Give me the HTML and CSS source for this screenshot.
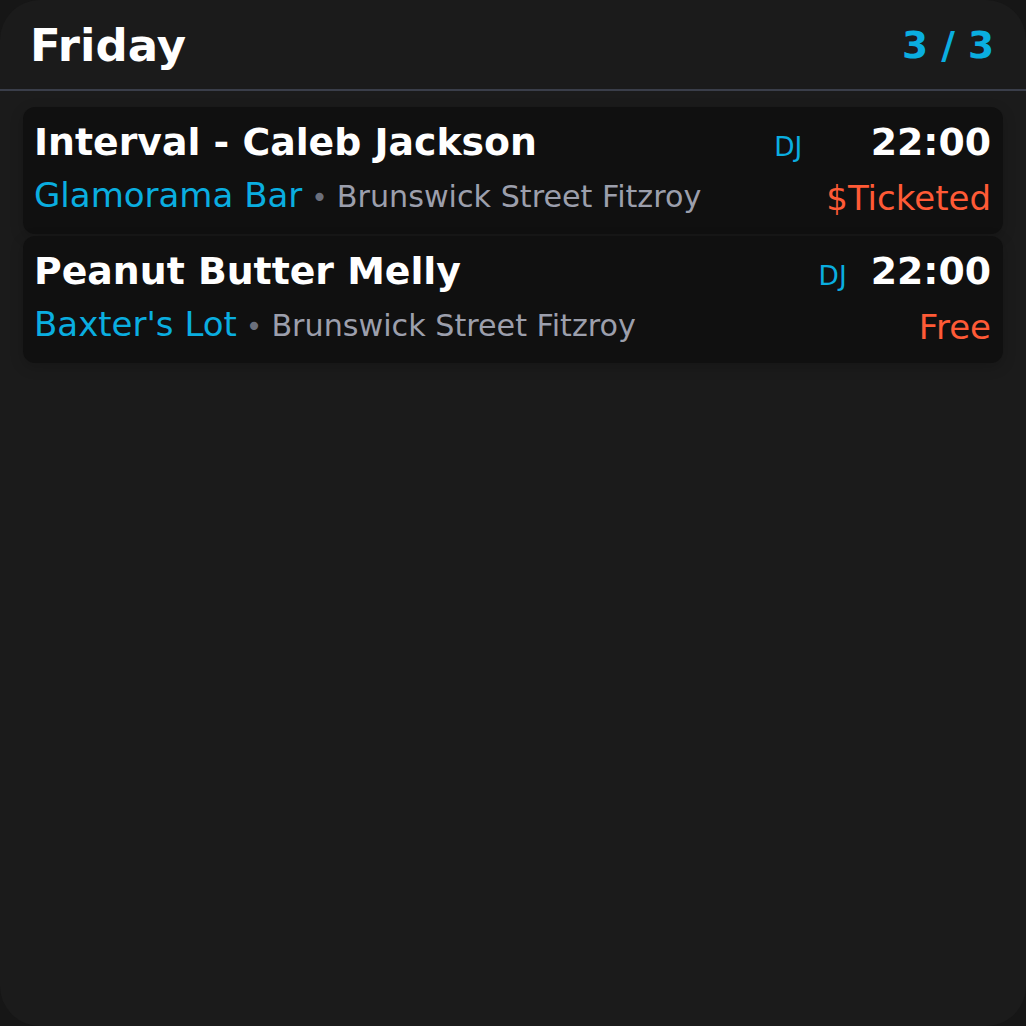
FILE: index.html
```html
<!DOCTYPE html>
<html>
<head>
<meta charset="utf-8">
<link rel="stylesheet" href="styles.css">
</head>
<body>
<div class="panel">
  <header class="head">
    <h1 class="day">Friday</h1>
    <div class="count">3 / 3</div>
  </header>
  <div class="list">
    <div class="card">
      <div class="main">
        <div class="title">Interval - Caleb Jackson</div>
        <div class="where"><span class="venue">Glamorama Bar</span><span class="dot">•</span><span class="addr">Brunswick Street Fitzroy</span></div>
      </div>
      <div class="tag">DJ</div>
      <div class="side">
        <div class="time">22:00</div>
        <div class="price">$Ticketed</div>
      </div>
    </div>
    <div class="card">
      <div class="main">
        <div class="title">Peanut Butter Melly</div>
        <div class="where"><span class="venue">Baxter's Lot</span><span class="dot">•</span><span class="addr">Brunswick Street Fitzroy</span></div>
      </div>
      <div class="tag">DJ</div>
      <div class="side">
        <div class="time">22:00</div>
        <div class="price">Free</div>
      </div>
    </div>
  </div>
</div>
</body>
</html>
```

FILE: styles.css
```css
html, body {
  margin: 0;
  padding: 0;
  background: #161616;
}
body {
  font-family: "DejaVu Sans", sans-serif;
  width: 1026px;
  height: 1026px;
  overflow: hidden;
}
.panel {
  width: 1026px;
  height: 1026px;
  background: #1b1b1b;
  border-radius: 40px;
  box-sizing: border-box;
}
.head {
  display: flex;
  justify-content: space-between;
  align-items: center;
  height: 91px;
  padding: 0 32px 0 30px;
  box-sizing: border-box;
  border-bottom: 2px solid #3a3e4a;
}
.day {
  margin: 0;
  font-size: 45px;
  font-weight: bold;
  color: #ffffff;
  line-height: 1;
  padding-top: 2px;
}
.count {
  font-size: 37.5px;
  font-weight: bold;
  color: #0aaee0;
  line-height: 1;
  padding-top: 2px;
}
.list {
  display: flex;
  flex-direction: column;
  gap: 2px;
  padding: 16px 23px 0 23px;
}
.card {
  display: flex;
  align-items: flex-start;
  background: #101010;
  border-radius: 12px;
  padding: 14px 12px 0 11px;
  height: 127px;
  box-sizing: border-box;
  box-shadow: 0 4px 14px rgba(0, 0, 0, 0.18);
}
.main {
  flex: 1;
  min-width: 0;
}
.title {
  font-size: 37.8px;
  font-weight: bold;
  color: #ffffff;
  line-height: 43px;
}
.where {
  margin-top: 11px;
  line-height: 40px;
  white-space: nowrap;
}
.venue {
  font-size: 34px;
  color: #0aaee0;
}
.dot {
  font-size: 28px;
  color: #6b6f7c;
  margin: 0 9px;
}
.addr {
  font-size: 30.2px;
  color: #9c9fac;
}
.tag {
  font-size: 26.4px;
  color: #0aaee0;
  line-height: 43px;
  margin-top: 4px;
  margin-right: 24px;
}
.side {
  display: flex;
  flex-direction: column;
  align-items: flex-end;
}
.time {
  font-size: 37.8px;
  font-weight: bold;
  color: #ffffff;
  line-height: 43px;
}
.price {
  margin-top: 14px;
  font-size: 34px;
  color: #ff5a36;
  line-height: 40px;
}
```
